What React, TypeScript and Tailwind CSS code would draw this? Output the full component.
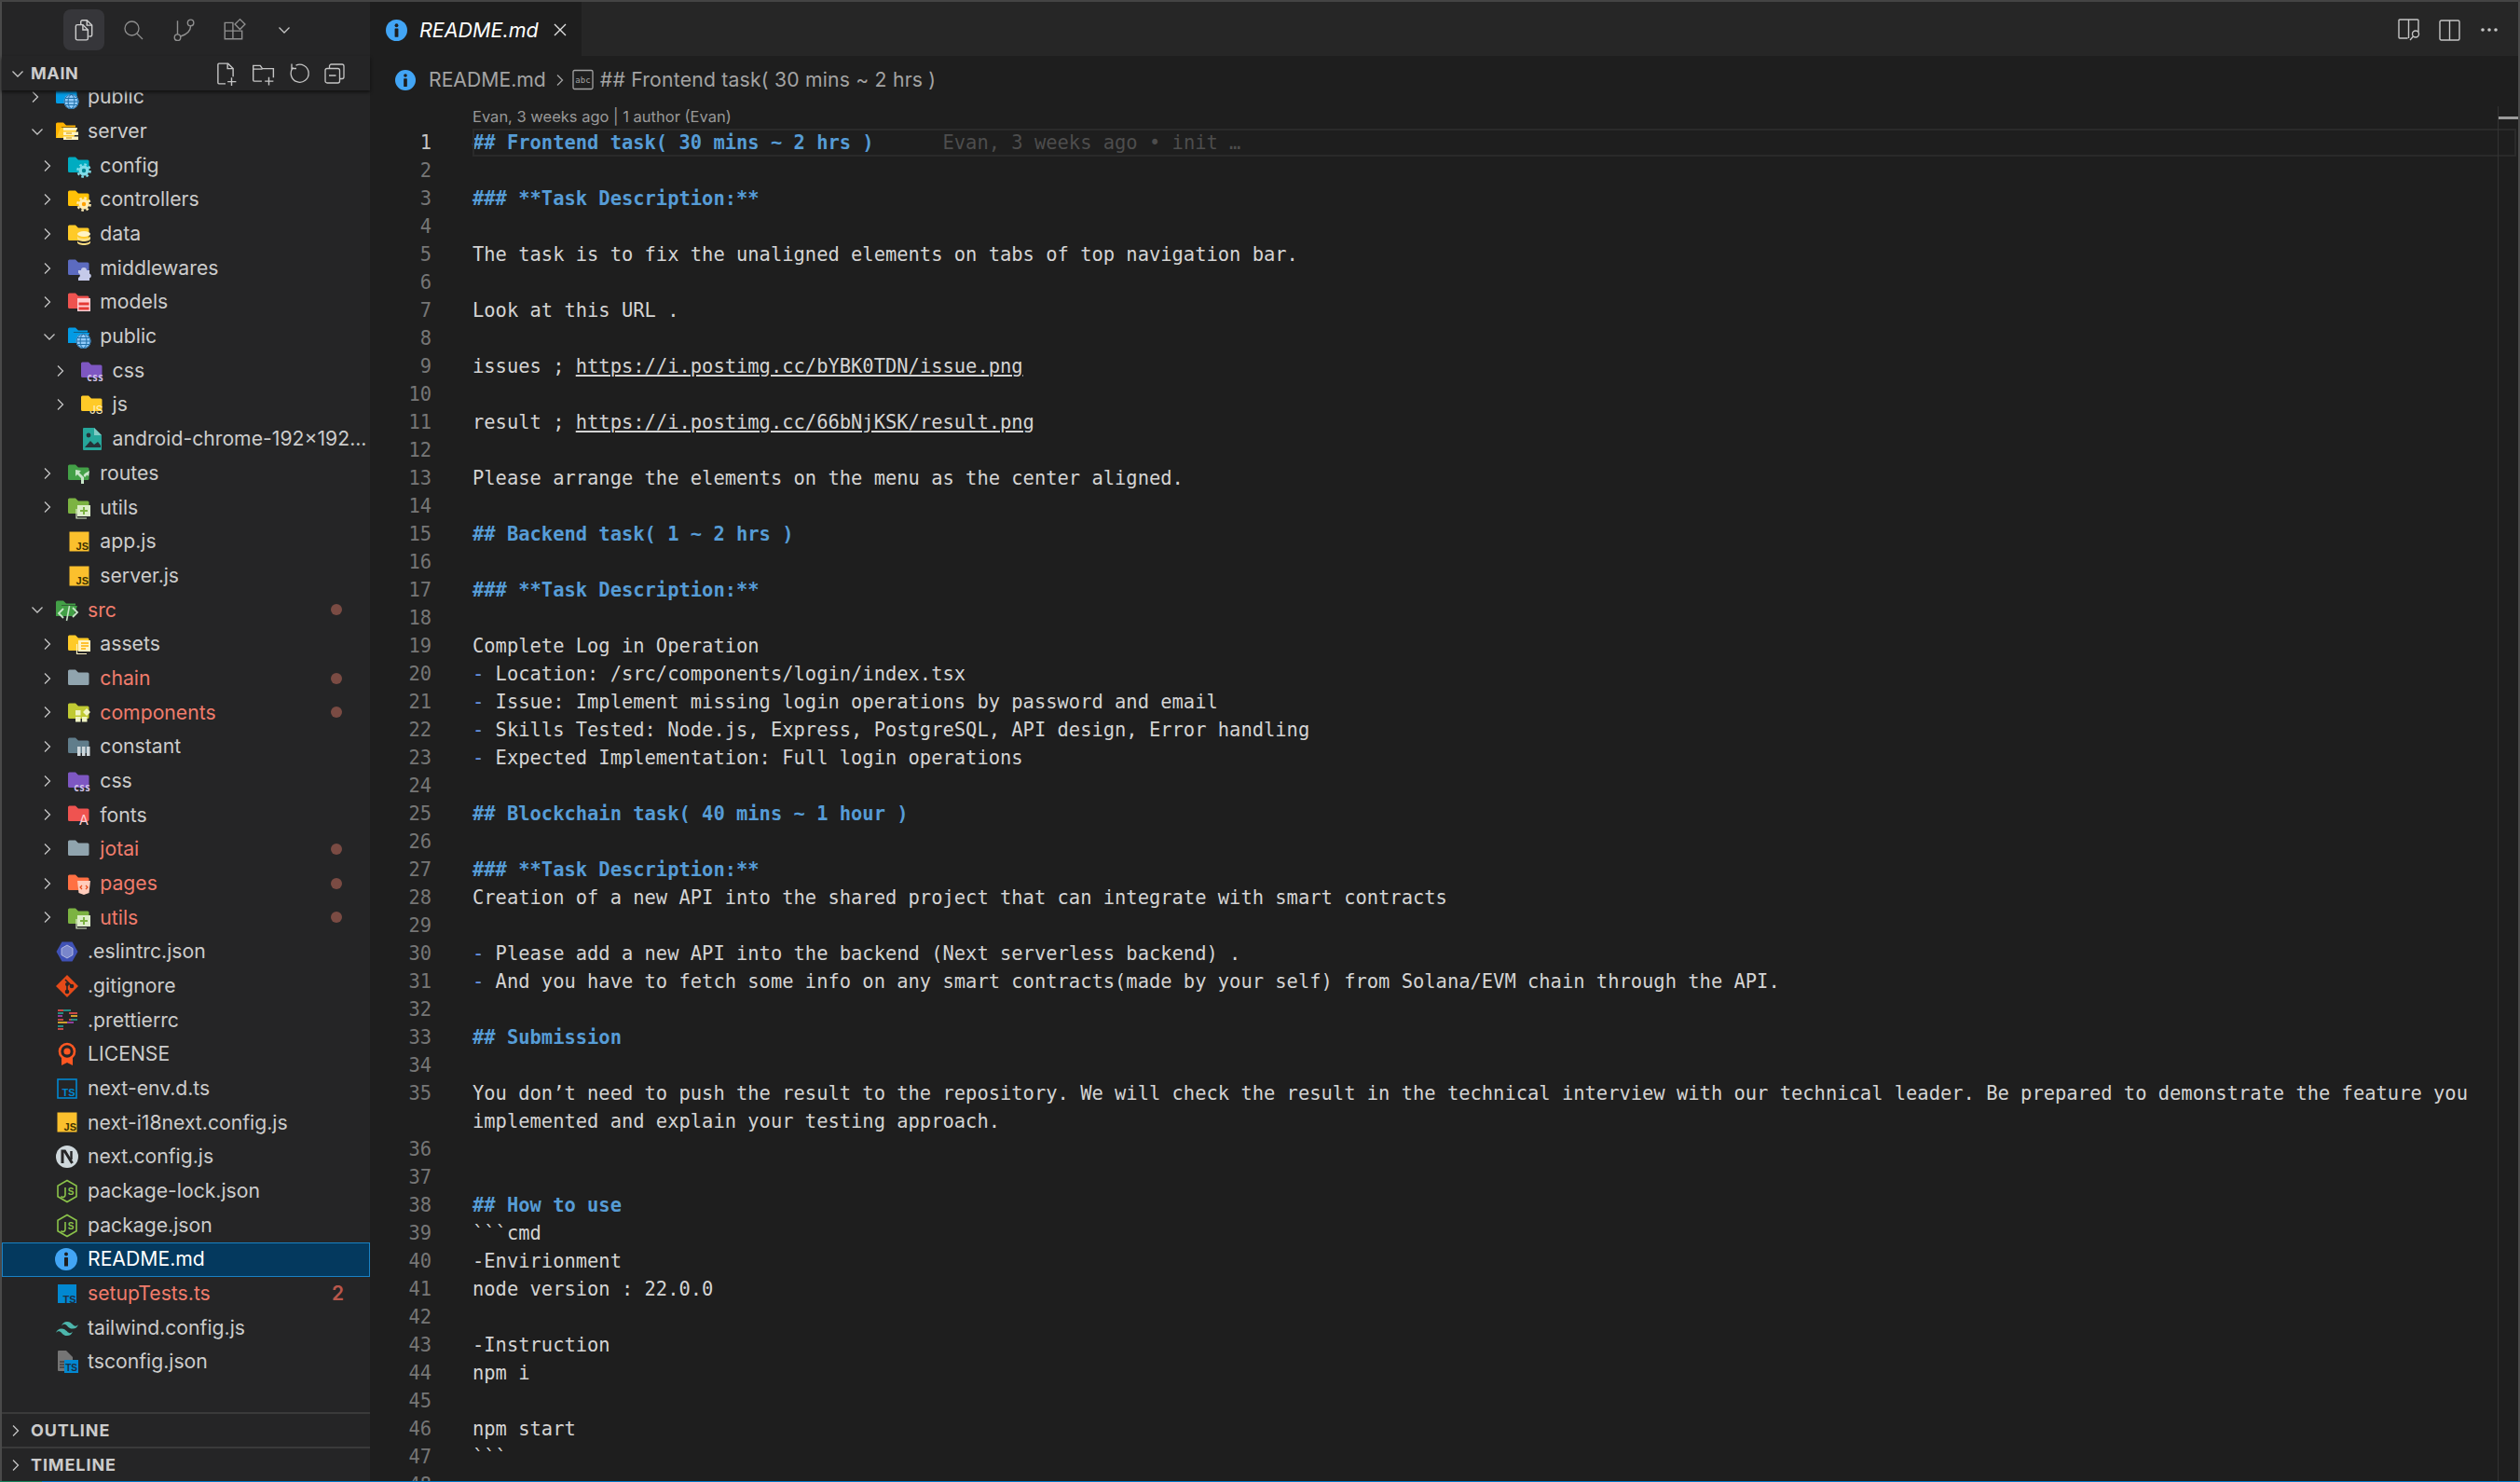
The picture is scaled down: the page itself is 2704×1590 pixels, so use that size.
import React from 'react';

type Row = {
  name: string;
  depth: number;
  icon: string;
  open?: boolean;
  file?: boolean;
  modified?: boolean;
  dot?: boolean;
  badge?: string;
  selected?: boolean;
};

const rows: Row[] = [
  { name: 'public', depth: 1, icon: 'public' },
  { name: 'server', depth: 1, icon: 'server', open: true },
  { name: 'config', depth: 2, icon: 'config' },
  { name: 'controllers', depth: 2, icon: 'controllers' },
  { name: 'data', depth: 2, icon: 'data' },
  { name: 'middlewares', depth: 2, icon: 'middlewares' },
  { name: 'models', depth: 2, icon: 'models' },
  { name: 'public', depth: 2, icon: 'publicOpen', open: true },
  { name: 'css', depth: 3, icon: 'css' },
  { name: 'js', depth: 3, icon: 'jsFolder' },
  { name: 'android-chrome-192x192...', depth: 3, icon: 'image', file: true },
  { name: 'routes', depth: 2, icon: 'routes' },
  { name: 'utils', depth: 2, icon: 'utils' },
  { name: 'app.js', depth: 2, icon: 'js', file: true },
  { name: 'server.js', depth: 2, icon: 'js', file: true },
  { name: 'src', depth: 1, icon: 'src', open: true, modified: true, dot: true },
  { name: 'assets', depth: 2, icon: 'assets' },
  { name: 'chain', depth: 2, icon: 'plain', modified: true, dot: true },
  { name: 'components', depth: 2, icon: 'components', modified: true, dot: true },
  { name: 'constant', depth: 2, icon: 'constant' },
  { name: 'css', depth: 2, icon: 'css' },
  { name: 'fonts', depth: 2, icon: 'fonts' },
  { name: 'jotai', depth: 2, icon: 'plain', modified: true, dot: true },
  { name: 'pages', depth: 2, icon: 'pages', modified: true, dot: true },
  { name: 'utils', depth: 2, icon: 'utils', modified: true, dot: true },
  { name: '.eslintrc.json', depth: 1, icon: 'eslint', file: true },
  { name: '.gitignore', depth: 1, icon: 'git', file: true },
  { name: '.prettierrc', depth: 1, icon: 'prettier', file: true },
  { name: 'LICENSE', depth: 1, icon: 'license', file: true },
  { name: 'next-env.d.ts', depth: 1, icon: 'dts', file: true },
  { name: 'next-i18next.config.js', depth: 1, icon: 'js', file: true },
  { name: 'next.config.js', depth: 1, icon: 'next', file: true },
  { name: 'package-lock.json', depth: 1, icon: 'node', file: true },
  { name: 'package.json', depth: 1, icon: 'node', file: true },
  { name: 'README.md', depth: 1, icon: 'info', file: true, selected: true },
  { name: 'setupTests.ts', depth: 1, icon: 'ts', file: true, modified: true, badge: '2' },
  { name: 'tailwind.config.js', depth: 1, icon: 'tailwind', file: true },
  { name: 'tsconfig.json', depth: 1, icon: 'tsconfig', file: true },
];

type Line = { n?: number; kind?: 'h' | 'li' | 'link'; text: string; prefix?: string };

const lines: Line[] = [
  { n: 1, kind: 'h', text: '## Frontend task( 30 mins ~ 2 hrs )' },
  { n: 2, text: '' },
  { n: 3, kind: 'h', text: '### **Task Description:**' },
  { n: 4, text: '' },
  { n: 5, text: 'The task is to fix the unaligned elements on tabs of top navigation bar.' },
  { n: 6, text: '' },
  { n: 7, text: 'Look at this URL .' },
  { n: 8, text: '' },
  { n: 9, kind: 'link', prefix: 'issues ; ', text: 'https://i.postimg.cc/bYBK0TDN/issue.png' },
  { n: 10, text: '' },
  { n: 11, kind: 'link', prefix: 'result ; ', text: 'https://i.postimg.cc/66bNjKSK/result.png' },
  { n: 12, text: '' },
  { n: 13, text: 'Please arrange the elements on the menu as the center aligned.' },
  { n: 14, text: '' },
  { n: 15, kind: 'h', text: '## Backend task( 1 ~ 2 hrs )' },
  { n: 16, text: '' },
  { n: 17, kind: 'h', text: '### **Task Description:**' },
  { n: 18, text: '' },
  { n: 19, text: 'Complete Log in Operation' },
  { n: 20, kind: 'li', text: 'Location: /src/components/login/index.tsx' },
  { n: 21, kind: 'li', text: 'Issue: Implement missing login operations by password and email' },
  { n: 22, kind: 'li', text: 'Skills Tested: Node.js, Express, PostgreSQL, API design, Error handling' },
  { n: 23, kind: 'li', text: 'Expected Implementation: Full login operations' },
  { n: 24, text: '' },
  { n: 25, kind: 'h', text: '## Blockchain task( 40 mins ~ 1 hour )' },
  { n: 26, text: '' },
  { n: 27, kind: 'h', text: '### **Task Description:**' },
  { n: 28, text: 'Creation of a new API into the shared project that can integrate with smart contracts' },
  { n: 29, text: '' },
  { n: 30, kind: 'li', text: 'Please add a new API into the backend (Next serverless backend) .' },
  { n: 31, kind: 'li', text: 'And you have to fetch some info on any smart contracts(made by your self) from Solana/EVM chain through the API.' },
  { n: 32, text: '' },
  { n: 33, kind: 'h', text: '## Submission' },
  { n: 34, text: '' },
  { n: 35, text: 'You don’t need to push the result to the repository. We will check the result in the technical interview with our technical leader. Be prepared to demonstrate the feature you' },
  { text: 'implemented and explain your testing approach.' },
  { n: 36, text: '' },
  { n: 37, text: '' },
  { n: 38, kind: 'h', text: '## How to use' },
  { n: 39, text: '```cmd' },
  { n: 40, text: '-Envirionment' },
  { n: 41, text: 'node version : 22.0.0' },
  { n: 42, text: '' },
  { n: 43, text: '-Instruction' },
  { n: 44, text: 'npm i' },
  { n: 45, text: '' },
  { n: 46, text: 'npm start' },
  { n: 47, text: '```' },
  { n: 48, text: '' },
];

const FOLDER = 'M1 5a1.5 1.5 0 0 1 1.5-1.5H9l3 3h10a1.5 1.5 0 0 1 1.5 1.5v10.5a1.5 1.5 0 0 1-1.5 1.5H2.5A1.5 1.5 0 0 1 1 18.5z';

const Folder = ({ color, children }: { color: string; children?: React.ReactNode }) => (
  <>
    <path d={FOLDER} fill={color} />
    {children}
  </>
);

const OpenFolder = ({ color, front, children }: { color: string; front?: string; children?: React.ReactNode }) => (
  <>
    <path d="M1 5a1.5 1.5 0 0 1 1.5-1.5H9l3 3h10v2H7L3 20H1z" fill={color} />
    <path d="M6 9h18l-4 11H1.5z" fill={front || color} />
    {children}
  </>
);

const Globe = () => (
  <g fill="none">
    <circle cx="17.500" cy="18" r="8" fill="#90caf9" />
    <g stroke="#1f6fa8" strokeWidth="1">
      <circle cx="17.500" cy="18" r="7.500" />
      <ellipse cx="17.500" cy="18" rx="3.400" ry="7.500" />
      <path d="M10 18h15M11 14.500h13M11 21.500h13" />
    </g>
  </g>
);

const Gear = ({ color, hole }: { color: string; hole: string }) => (
  <g>
    <circle cx="18" cy="18" r="5.5" fill={color} />
    <circle cx="18" cy="18" r="6.6" fill="none" stroke={color} strokeWidth="2.4" strokeDasharray="2.6 2.6" />
    <circle cx="18" cy="18" r="2.2" fill={hole} />
  </g>
);

const JsBadge = ({ size = 21 }: { size?: number }) => (
  <svg width={26} height={26} viewBox="0 0 26 26">
    <rect x={(26 - size) / 2} y={(26 - size) / 2} width={size} height={size} fill="#fbc02d" />
    <text x="23" y="22" textAnchor="end" fontSize="11" fontWeight="700" fontFamily="Liberation Sans, sans-serif" fill="#3b3000">JS</text>
  </svg>
);

const FileIcon = ({ name }: { name: string }) => {
  if (name === 'js') return <JsBadge />;
  const svg = (c: React.ReactNode) => (
    <svg width={26} height={26} viewBox="0 0 26 26" className="overflow-visible">
      {c}
    </svg>
  );
  switch (name) {
    case 'public':
      return svg(
        <Folder color="#039be5">
          <Globe />
        </Folder>
      );
    case 'publicOpen':
      return svg(
        <OpenFolder color="#039be5">
          <Globe />
        </OpenFolder>
      );
    case 'server':
      return svg(
        <OpenFolder color="#ffb300" front="#ffca28">
          <path d="M9 9h15l-1 3H9zM9 13.5h16v3.5H9zM9 18.5h16v3.5H9z" fill="#fff3c4" />
          <path d="M12 15h6M12 20h6" stroke="#c79100" strokeWidth="1" />
        </OpenFolder>
      );
    case 'config':
      return svg(
        <Folder color="#00acc1">
          <Gear color="#80deea" hole="#00838f" />
        </Folder>
      );
    case 'controllers':
      return svg(
        <Folder color="#ffc107">
          <Gear color="#ffecb3" hole="#ffa000" />
        </Folder>
      );
    case 'data':
      return svg(
        <Folder color="#ffca28">
          <ellipse cx="18" cy="13" rx="7" ry="3" fill="#fff3c4" />
          <path d="M11 15c0 4 14 4 14 0v3c0 4-14 4-14 0z" fill="#ffe082" />
          <path d="M11 20c0 4 14 4 14 0v2c0 4-14 4-14 0z" fill="#ffe082" />
        </Folder>
      );
    case 'middlewares':
      return svg(
        <Folder color="#5c6bc0">
          <path d="M12 15h3a3 3 0 0 1 6 0h3v3.5a2.6 2.6 0 0 1 0 5V26H12v-3a2.6 2.6 0 0 0 0-5z" fill="#c5cae9" />
        </Folder>
      );
    case 'models':
      return svg(
        <Folder color="#ef5350">
          <path d="M11 9h14v14H11z" fill="#ffcdd2" />
          <path d="M12.5 13.5h11v3h-11zM12.5 18.5h11v3h-11z" fill="#e53935" />
        </Folder>
      );
    case 'css':
      return svg(
        <Folder color="#7e57c2">
          <text x="7" y="23.500" fontSize="12" fontWeight="700" fontFamily="DejaVu Sans Mono, monospace" fill="#d1c4e9" textLength="18" lengthAdjust="spacingAndGlyphs">css</text>
        </Folder>
      );
    case 'jsFolder':
      return svg(
        <Folder color="#ffca28">
          <text x="24.500" y="22.500" textAnchor="end" fontSize="12" fontFamily="Inter, sans-serif" fill="#fff3c4">JS</text>
        </Folder>
      );
    case 'image':
      return svg(
        <>
          <path d="M4 1h11l8 8v15a1 1 0 0 1-1 1H4a1 1 0 0 1-1-1V2a1 1 0 0 1 1-1z" fill="#26a69a" />
          <path d="M15 1v8h8z" fill="#80cbc4" />
          <circle cx="9" cy="9" r="2.4" fill="#263238" />
          <path d="M5 22l6-7 4 4 4-3 3 4v2z" fill="#263238" />
        </>
      );
    case 'routes':
      return svg(
        <Folder color="#43a047">
          <path d="M9 9l6 1-2 2 5 5v7h-3v-6l-4-4-2 2zM19 13l5-3-1 6-1.5-1.5-2.5 2.5-1.5-2z" fill="#c8e6c9" />
        </Folder>
      );
    case 'utils':
      return svg(
        <Folder color="#7cb342">
          <path d="M11 11h14v12H11z" fill="#dcedc8" />
          <path d="M18 13v8M14 17h8" stroke="#7cb342" strokeWidth="2" />
          <path d="M10 15v10h11" fill="none" stroke="#dcedc8" strokeWidth="1.2" />
        </Folder>
      );
    case 'src':
      return svg(
        <OpenFolder color="#43a047">
          <path d="M9 12l-5 5 5 5M19 11l5 5-5 5" fill="none" stroke="#c8e6c9" strokeWidth="1.8" />
          <path d="M15.5 9l-3 16" stroke="#c8e6c9" strokeWidth="1.5" />
        </OpenFolder>
      );
    case 'assets':
      return svg(
        <Folder color="#ffca28">
          <path d="M12 9h13v12H12z" fill="#fff3c4" />
          <path d="M15 12h8M15 15h8M15 18h5" stroke="#ffb300" strokeWidth="1.4" />
          <path d="M10.5 13v10.5H21" fill="none" stroke="#fff3c4" strokeWidth="1.2" />
        </Folder>
      );
    case 'plain':
      return svg(<Folder color="#90a4ae" />);
    case 'components':
      return svg(
        <Folder color="#c0ca33">
          <path d="M9 11h5.5v5.5H9zM9 18h5.5v5.5H9zM16 18h5.5v5.5H16z" fill="#f0f4c3" />
          <path d="M21 9l4 4-4 4-4-4z" fill="#f0f4c3" />
        </Folder>
      );
    case 'constant':
      return svg(
        <Folder color="#607d8b">
          <path d="M11 13h3.5v10H11zM16 13h3.5v10H16zM21 13h3.5v10H21z" fill="#cfd8dc" />
        </Folder>
      );
    case 'fonts':
      return svg(
        <Folder color="#ef5350">
          <text x="18" y="23.500" textAnchor="middle" fontSize="15" fontFamily="Inter, sans-serif" fill="#ffcdd2">A</text>
        </Folder>
      );
    case 'pages':
      return svg(
        <Folder color="#ff7043">
          <path d="M11 10h14l-1.5 13L18 25l-5.5-2z" fill="#ffccbc" />
          <path d="M16 15l-2 2 2 2M20 15l2 2-2 2" fill="none" stroke="#e64a19" strokeWidth="1.2" />
        </Folder>
      );
    case 'eslint':
      return svg(
        <>
          <path d="M7.500 2.500h11L24.500 13l-6 10.500h-11L1.500 13z" fill="#3f51b5" />
          <path d="M13 6l6 3.500v7L13 20l-6-3.500v-7z" fill="#7986cb" stroke="#c5cae9" strokeWidth="0.8" />
        </>
      );
    case 'git':
      return svg(
        <>
          <path d="M13 1l12 12-12 12L1 13z" fill="#e64a19" />
          <path d="M11 6l6 6M13 11v9" stroke="#252526" strokeWidth="1.6" />
          <circle cx="13" cy="11" r="2" fill="#252526" />
          <circle cx="13" cy="19" r="2.3" fill="#252526" />
          <circle cx="18" cy="13" r="2.3" fill="#252526" />
        </>
      );
    case 'prettier':
      return svg(
        <g strokeWidth="1.6">
          <path d="M3 3h6" stroke="#ef5350" />
          <path d="M9 3h8" stroke="#26a69a" />
          <path d="M3 6h6" stroke="#26a69a" />
          <path d="M15 6h9" stroke="#ef5350" />
          <path d="M3 9h5" stroke="#ab47bc" />
          <path d="M17 9h7" stroke="#fbc02d" />
          <path d="M3 13h6M15 13h3" stroke="#ef5350" />
          <path d="M17 13h7" stroke="#26a69a" />
          <path d="M3 16h10" stroke="#fbc02d" />
          <path d="M13 16h7" stroke="#ab47bc" />
          <path d="M3 20h6" stroke="#26a69a" />
          <path d="M3 23h6" stroke="#ef5350" />
        </g>
      );
    case 'license':
      return svg(
        <>
          <path d="M7 16v9l6-3 6 3v-9z" fill="#ff5722" />
          <circle cx="13" cy="10" r="8" fill="#252526" stroke="#ff5722" strokeWidth="2.6" />
          <circle cx="13" cy="10" r="3.6" fill="#ff5722" />
        </>
      );
    case 'dts':
      return svg(
        <>
          <rect x="3" y="3" width="20" height="20" fill="none" stroke="#0288d1" strokeWidth="1.6" />
          <text x="21.500" y="21" textAnchor="end" fontSize="11" fontWeight="700" fontFamily="Liberation Sans, sans-serif" fill="#0288d1">TS</text>
        </>
      );
    case 'ts':
      return svg(
        <>
          <rect x="3" y="3" width="20" height="20" fill="#0288d1" />
          <text x="22.500" y="22.500" textAnchor="end" fontSize="11" fontWeight="700" fontFamily="Liberation Sans, sans-serif" fill="#1b2f45">TS</text>
        </>
      );
    case 'next':
      return svg(
        <>
          <circle cx="13" cy="13" r="12" fill="#cfd8dc" />
          <path d="M8 20V7h2.500l8 13" fill="none" stroke="#252526" strokeWidth="3" />
          <path d="M17.500 7v9" stroke="#252526" strokeWidth="2.400" />
        </>
      );
    case 'node':
      return svg(
        <>
          <path d="M13 1.500l10 5.700v11.600l-10 5.700-10-5.700V7.200z" fill="none" stroke="#8bc34a" strokeWidth="1.600" />
          <path d="M11 9v8a2.500 2.500 0 0 1-4.500 1.500" fill="none" stroke="#8bc34a" strokeWidth="1.600" />
          <text x="17" y="16.500" textAnchor="middle" fontSize="10" fontWeight="700" fontFamily="Liberation Sans, sans-serif" fill="#8bc34a">S</text>
        </>
      );
    case 'info':
      return <InfoIcon size={24} />;
    case 'tailwind':
      return svg(
        <g fill="#4db6ac">
          <path d="M13 6c-3 0-5 1.600-6 4.500 1.200-1.500 2.600-2 4-1.500 1 .3 1.700 1.100 2.500 1.900 1.200 1.300 2.700 2.600 5.500 2.600 3 0 5-1.500 6-4.500-1.200 1.500-2.600 2-4 1.500-1-.3-1.700-1.100-2.500-1.900C17.300 7.300 15.800 6 13 6z" />
          <path d="M7 13.500c-3 0-5 1.500-6 4.500 1.200-1.500 2.600-2 4-1.500 1 .3 1.700 1.100 2.500 1.900 1.200 1.300 2.700 2.600 5.500 2.600 3 0 5-1.500 6-4.500-1.200 1.500-2.600 2-4 1.500-1-.3-1.700-1.100-2.500-1.900-1.200-1.300-2.700-2.600-5.500-2.600z" />
        </g>
      );
    case 'tsconfig':
      return svg(
        <>
          <path d="M4 1h8l7 7v15H4a1 1 0 0 1-1-1V2a1 1 0 0 1 1-1z" fill="#757575" />
          <path d="M5 13h5M5 16h5M5 19h5" stroke="#252526" strokeWidth="1.200" />
          <rect x="10" y="11" width="15" height="14" fill="#0288d1" />
          <text x="24" y="23" textAnchor="end" fontSize="10" fontWeight="700" fontFamily="Liberation Sans, sans-serif" fill="#1b2f45">TS</text>
        </>
      );
    default:
      return svg(null);
  }
};

const InfoIcon = ({ size }: { size: number }) => (
  <svg width={size} height={size} viewBox="0 0 24 24">
    <circle cx="12" cy="12" r="12" fill="#42a5f5" />
    <circle cx="12" cy="6.500" r="2" fill="#1e1e1e" />
    <rect x="10" y="10" width="4" height="9.500" rx="0.500" fill="#1e1e1e" />
  </svg>
);

const Chevron = ({ open, className }: { open?: boolean; className?: string }) =>
  open ? (
    <svg width={16} height={16} viewBox="0 0 16 16" className={className} fill="none" stroke="#c5c5c5" strokeWidth="1.300">
      <path d="M2.500 5.500L8 11l5.500-5.500" />
    </svg>
  ) : (
    <svg width={16} height={16} viewBox="0 0 16 16" className={className} fill="none" stroke="#c5c5c5" strokeWidth="1.300">
      <path d="M3 2.500L8.500 8 3 13.500" />
    </svg>
  );

const Icon = ({ children, w = 24 }: { children: React.ReactNode; w?: number }) => (
  <svg width={w} height={w} viewBox="0 0 24 24" fill="none" stroke="currentColor" strokeWidth="1.300">
    {children}
  </svg>
);

const TreeRow = ({ row }: { row: Row }) => (
  <div
    className={`flex h-[36.68px] items-center border shrink-0 ${
      row.selected ? 'bg-[#04395e] border-[#1a81c4] text-white' : 'border-transparent'
    } ${row.modified ? 'text-[#f07c6c]' : row.selected ? '' : 'text-[#cccccc]'}`}
    style={{ paddingLeft: 29 + (row.depth - 1) * 13.3 }}
  >
    <div className="w-[27px] shrink-0 flex">
      {!row.file && <Chevron open={row.open} />}
    </div>
    <div className="w-[35px] shrink-0 flex">
      <FileIcon name={row.icon} />
    </div>
    <span className="flex-1 whitespace-pre">{row.name}</span>
    {row.dot && <div className="w-[12px] h-[12px] rounded-full bg-[#7a4b43] mr-[29px] shrink-0" />}
    {row.badge && <span className="text-[#b9574b] font-semibold mr-[27px] text-[21px]">{row.badge}</span>}
  </div>
);

const CodeLine = ({ line, active }: { line: Line; active: boolean }) => (
  <div className={`flex h-[30px] shrink-0 items-center whitespace-pre ${active ? 'relative' : ''}`}>
    <div className={`w-[66px] shrink-0 text-right ${active ? 'text-[#c6c6c6]' : 'text-[#767676]'}`}>{line.n}</div>
    <div className="w-[44px] shrink-0" />
    {active && <div className="absolute left-[110px] right-[2px] top-0 bottom-0 border-2 border-[#2a2a2a]" />}
    {line.kind === 'h' && <span className="text-[#569cd6] font-bold">{line.text}</span>}
    {line.kind === 'li' && (
      <>
        <span className="text-[#6796e6]">- </span>
        <span>{line.text}</span>
      </>
    )}
    {line.kind === 'link' && (
      <>
        <span>{line.prefix}</span>
        <span className="underline underline-offset-2">{line.text}</span>
      </>
    )}
    {!line.kind && <span>{line.text}</span>}
    {active && <span className="text-[#4d4d4d]">      Evan, 3 weeks ago • init …</span>}
  </div>
);

export default function App() {
  return (
    <div className="w-[2704px] h-[1590px] flex flex-col overflow-hidden bg-[#1e1e1e] font-['Inter',sans-serif] text-[21.2px] text-[#cccccc]">
      <div className="h-[2px] bg-[#444444] shrink-0" />
      <div className="flex flex-1 min-h-0">
        {/* sidebar */}
        <aside className="w-[397px] shrink-0 flex flex-col bg-[#252526] border-l-2 border-[#4a4a4a]">
          <div className="h-[58px] shrink-0 flex items-center pl-[66px] pt-[2px] text-[#8f8f8f]">
            <div className="w-[44px] h-[44px] rounded-lg bg-[#36363a] flex items-center justify-center text-[#cfcfcf]">
              <Icon w={26}>
                <path d="M9 6.500V4a1.500 1.500 0 0 1 1.500-1.500H15l5 5V17a1.500 1.500 0 0 1-1.500 1.500H17" />
                <path d="M5.500 7H11l5 5v8.500A1.500 1.500 0 0 1 14.500 22h-9A1.500 1.500 0 0 1 4 20.500v-12A1.500 1.500 0 0 1 5.500 7z" />
                <path d="M11 7v5h5M15 2.500v5h5" />
              </Icon>
            </div>
            <div className="ml-[19px]">
              <Icon w={24}>
                <circle cx="10.500" cy="10.500" r="7.500" />
                <path d="M16 16l6 6" />
              </Icon>
            </div>
            <div className="ml-[29px]">
              <Icon w={26}>
                <circle cx="6" cy="19.500" r="3" />
                <circle cx="19" cy="5" r="3" />
                <path d="M6 16.500V3M19 8c0 5-4 8.500-10 10.500" />
              </Icon>
            </div>
            <div className="ml-[28px]">
              <Icon w={26}>
                <path d="M3 5h8v16H3zM3 13h17v8H3zM11 13V5" />
                <path d="M18 1.500l5 5-5 5-5-5z" />
              </Icon>
            </div>
            <div className="ml-[33px]">
              <Chevron open />
            </div>
          </div>
          <div className="h-[37px] shrink-0 flex items-center relative z-10 bg-[#252526] shadow-[0_2px_3px_#111111] text-[#cccccc]">
            <div className="w-[30px] pl-[9px] flex">
              <Chevron open />
            </div>
            <span className="text-[18px] font-bold tracking-[0.6px] ml-[1px]">MAIN</span>
            <div className="ml-auto flex items-center gap-[14px] mr-[26px] text-[#c5c5c5]">
              <Icon w={26}>
                <path d="M12 22H5.500a1 1 0 0 1-1-1V3a1 1 0 0 1 1-1h9l5 5v8" />
                <path d="M14 2v5h5.500M18 16v8M14 20h8.500" />
              </Icon>
              <Icon w={26}>
                <path d="M11 19.500H3.500a1 1 0 0 1-1-1V4h7l2 3h11v9" />
                <path d="M2.500 7.500h9M18 15.500v8M14 19.500h8.500" />
              </Icon>
              <Icon w={24}>
                <path d="M5.500 5.500a9.500 9.500 0 1 0 3-2.300" />
                <path d="M4 1.500v5h5" />
              </Icon>
              <Icon w={24}>
                <rect x="2" y="6.500" width="15.500" height="15.500" rx="2" />
                <path d="M6.500 6V4a2 2 0 0 1 2-2H20a2 2 0 0 1 2 2v11.500a2 2 0 0 1-2 2h-2.500M6 14h7.500" />
              </Icon>
            </div>
          </div>
          <div className="flex-1 min-h-0 overflow-hidden flex flex-col -mt-[11px]">
            {rows.map((row, i) => (
              <TreeRow key={i} row={row} />
            ))}
          </div>
          <div className="h-[37px] shrink-0 flex items-center border-t-2 border-[#3a3a3a]">
            <div className="w-[30px] pl-[9px] flex">
              <Chevron />
            </div>
            <span className="text-[18px] font-bold tracking-[0.9px] ml-[1px]">OUTLINE</span>
          </div>
          <div className="h-[37px] shrink-0 flex items-center border-t-2 border-[#3a3a3a]">
            <div className="w-[30px] pl-[9px] flex">
              <Chevron />
            </div>
            <span className="text-[18px] font-bold tracking-[0.9px] ml-[1px]">TIMELINE</span>
          </div>
        </aside>

        {/* editor */}
        <main className="flex-1 min-w-0 flex flex-col relative border-r-2 border-[#4a4a4a]">
          <div className="h-[58px] shrink-0 flex bg-[#262626]">
            <div className="w-[227px] bg-[#1e1e1e] flex items-center pl-[17px] pt-[2px]">
              <InfoIcon size={23} />
              <span className="ml-[13px] italic text-white text-[21.5px]">README.md</span>
              <svg width={16} height={16} viewBox="0 0 16 16" className="ml-[15px]" fill="none" stroke="#e0e0e0" strokeWidth="1.400">
                <path d="M2 2l12 12M14 2L2 14" />
              </svg>
            </div>
            <div className="ml-auto flex items-center pr-[22px] pt-[2px] gap-[20px] text-[#c5c5c5]">
              <svg width={24} height={24} viewBox="0 0 24 24" fill="none" stroke="currentColor" strokeWidth="1.400">
                <path d="M10.500 21H2a1 1 0 0 1-1-1V2a1 1 0 0 1 1-1h19a1 1 0 0 1 1 1v12M11.500 1v20" />
                <circle cx="19" cy="16.500" r="3.500" />
                <path d="M16.500 19L13 23" />
              </svg>
              <svg width={23} height={23} viewBox="0 0 23 23" fill="none" stroke="currentColor" strokeWidth="1.400">
                <rect x="1" y="1" width="21" height="21" rx="1.500" />
                <path d="M11.500 1v21" />
              </svg>
              <svg width={18} height={24} viewBox="0 0 18 24" fill="currentColor" className="ml-[2px]">
                <circle cx="2" cy="12" r="1.800" />
                <circle cx="9" cy="12" r="1.800" />
                <circle cx="16" cy="12" r="1.800" />
              </svg>
            </div>
          </div>
          <div className="h-[52px] shrink-0 flex items-center pl-[27px] text-[#a3a3a3] pb-[1px]">
            <InfoIcon size={22} />
            <span className="ml-[14px]">README.md</span>
            <svg width={12} height={16} viewBox="0 0 12 16" className="ml-[9px]" fill="none" stroke="#a3a3a3" strokeWidth="1.300">
              <path d="M3 2.500L8.500 8 3 13.500" />
            </svg>
            <svg width={23} height={23} viewBox="0 0 23 23" className="ml-[7px]" fill="none" stroke="#a3a3a3" strokeWidth="1.300">
              <rect x="1" y="1.500" width="21" height="20" rx="1.500" />
              <text x="11.500" y="14.500" textAnchor="middle" fontSize="9" stroke="none" fill="#a3a3a3" fontFamily="DejaVu Sans Mono, monospace">abc</text>
            </svg>
            <span className="ml-[7px] tracking-[0.2px]">## Frontend task( 30 mins ~ 2 hrs )</span>
          </div>
          <div className="h-[26px] shrink-0 flex items-center pl-[110px] text-[16.5px] text-[#999999]">
            Evan, 3 weeks ago | 1 author (Evan)
          </div>
          <div className="flex-1 min-h-0 overflow-hidden flex flex-col font-['DejaVu_Sans_Mono',monospace] text-[20.45px] text-[#d4d4d4]">
            {lines.map((line, i) => (
              <CodeLine key={i} line={line} active={i === 0} />
            ))}
          </div>
          {/* overview ruler */}
          <div className="absolute right-0 top-[112px] bottom-0 w-[22px] border-l border-[#333333]">
            <div className="h-[3px] mt-[11px] bg-[#9a9a9a]" />
          </div>
        </main>
      </div>
      <div className="h-px shrink-0 flex">
        <div className="w-[45px] bg-[#16825d]" />
        <div className="flex-1 bg-[#007acc]" />
      </div>
    </div>
  );
}
